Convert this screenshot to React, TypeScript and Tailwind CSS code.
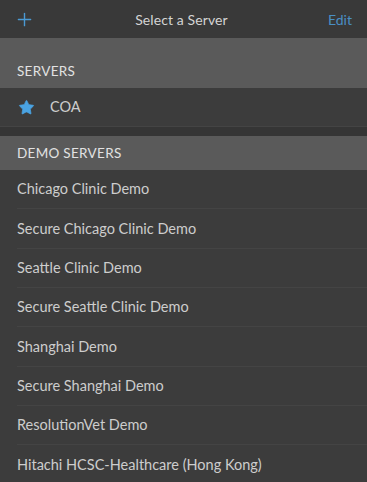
import { Plus, Star } from "lucide-react"

const demoServers = [
  "Chicago Clinic Demo",
  "Secure Chicago Clinic Demo",
  "Seattle Clinic Demo",
  "Secure Seattle Clinic Demo",
  "Shanghai Demo",
  "Secure Shanghai Demo",
  "ResolutionVet Demo",
  "Hitachi HCSC-Healthcare (Hong Kong)",
]

export default function App() {
  return (
    <div
      className="w-[367px] h-[482px] overflow-hidden bg-[#3c3c3c] text-[#cdcdcd]"
      style={{ fontFamily: "Lato, 'Open Sans', sans-serif" }}
    >
      {/* Nav bar */}
      <div className="h-[38px] bg-[#393939] flex items-center justify-between px-[14px]">
        <Plus className="w-[21px] h-[21px] text-[#4a9ad4]" strokeWidth={1.6} />
        <span className="text-[14px] text-[#d4d4d4] tracking-[0.1px]">Select a Server</span>
        <span className="text-[14px] text-[#4a8fc4] pr-[1px]">Edit</span>
      </div>

      {/* Servers */}
      <div className="h-[50px] bg-[#5a5a5a] flex items-end pb-[7px] px-[17px]">
        <span className="text-[13.5px] tracking-[0.3px] text-[#e2e2e2]">SERVERS</span>
      </div>
      <div className="h-[39px] flex items-center px-[18px] gap-[15px] border-b border-[#444]">
        <Star className="w-[17px] h-[17px] text-[#4aa3e2] fill-[#4aa3e2]" strokeWidth={1} />
        <span className="text-[14.5px]">COA</span>
      </div>
      <div className="h-[9px] bg-[#353535]" />

      {/* Demo servers */}
      <div className="h-[34px] bg-[#5a5a5a] flex items-center px-[17px]">
        <span className="text-[13.5px] tracking-[0.3px] text-[#e2e2e2]">DEMO SERVERS</span>
      </div>
      {demoServers.map((name) => (
        <div key={name} className="h-[39.33px] pl-[17px]">
          <div className="h-full flex items-center border-b border-[#444] text-[14.5px]">
            {name}
          </div>
        </div>
      ))}
    </div>
  )
}
